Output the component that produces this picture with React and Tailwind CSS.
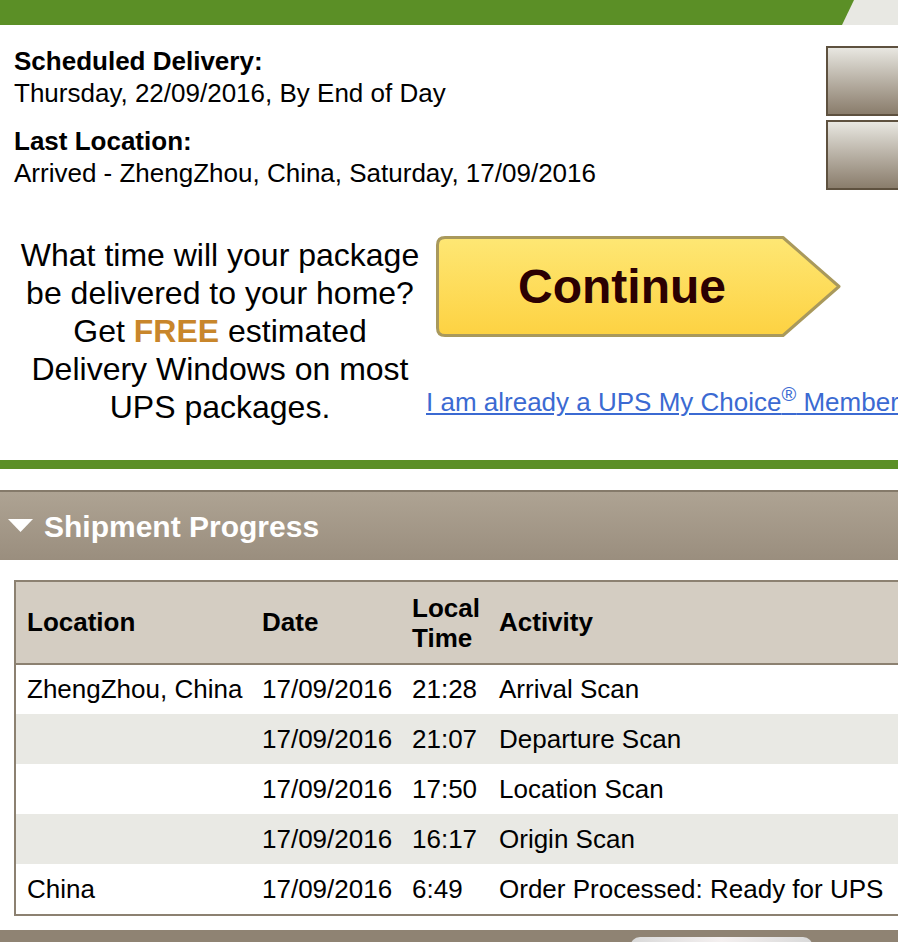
import React from 'react';

const rows = [
  { location: 'ZhengZhou, China', date: '17/09/2016', time: '21:28', activity: 'Arrival Scan' },
  { location: '', date: '17/09/2016', time: '21:07', activity: 'Departure Scan' },
  { location: '', date: '17/09/2016', time: '17:50', activity: 'Location Scan' },
  { location: '', date: '17/09/2016', time: '16:17', activity: 'Origin Scan' },
  { location: 'China', date: '17/09/2016', time: '6:49', activity: 'Order Processed: Ready for UPS' },
];

function ContinueButton() {
  return (
    <div className="relative w-[406px] h-[101px]">
      <svg className="absolute inset-0" width="406" height="101" viewBox="0 0 406 101">
        <defs>
          <linearGradient id="cont" x1="0" y1="0" x2="0" y2="1">
            <stop offset="0" stopColor="#fee774" />
            <stop offset="1" stopColor="#fdd242" />
          </linearGradient>
        </defs>
        <path
          d="M9 1.5 H347 L403 50.5 L347 99.5 H9 Q1.5 99.5 1.5 92 V9 Q1.5 1.5 9 1.5 Z"
          fill="url(#cont)"
          stroke="#a9995c"
          strokeWidth="3"
          strokeLinejoin="round"
        />
      </svg>
      <div className="absolute left-0 top-0 w-[372px] h-[101px] flex items-center justify-center">
        <span className="text-[48px] font-bold text-[#2b0002] leading-none">Continue</span>
      </div>
    </div>
  );
}

export default function App() {
  return (
    <div className="w-[898px] min-h-screen overflow-hidden bg-white text-black font-['Liberation_Sans',Arial,sans-serif]">
      {/* top bar */}
      <div className="h-[25px] bg-[#e8e8e3]">
        <div className="h-full w-[854px] bg-[#5b8f26] [clip-path:polygon(0_0,100%_0,calc(100%-12px)_100%,0_100%)]"></div>
      </div>

      {/* status */}
      <div className="flex justify-between">
        <div className="pl-[14px] pt-[20px] text-[26px] leading-[32px]">
          <div className="font-bold">Scheduled Delivery:</div>
          <div>Thursday, 22/09/2016, By End of Day</div>
          <div className="font-bold mt-[16px]">Last Location:</div>
          <div>Arrived - ZhengZhou, China, Saturday, 17/09/2016</div>
        </div>
        <div className="pt-[21px] flex flex-col gap-[4px] w-[72px] shrink-0">
          <div className="h-[70px] w-[90px] border-2 border-[#5e513f] bg-gradient-to-b from-[#e8e7e1] to-[#8a7d6c]"></div>
          <div className="h-[70px] w-[90px] border-2 border-[#5e513f] bg-gradient-to-b from-[#e8e7e1] to-[#8a7d6c]"></div>
        </div>
      </div>

      {/* promo */}
      <div className="flex items-start mt-[46px]">
        <div className="w-[426px] pl-[14px] shrink-0 text-center text-[32px] leading-[38px]">
          What time will your package be delivered to your home? Get{' '}
          <span className="font-bold text-[#c8862b]">FREE</span> estimated Delivery Windows on most UPS packages.
        </div>
        <div className="flex flex-col">
          <div className="ml-[10px]">
            <ContinueButton />
          </div>
          <a href="#" className="mt-[50px] whitespace-nowrap text-[26px] leading-[30px] text-[#3b6ad2] underline">
            I am already a UPS My Choice<sup className="text-[20px]">®</sup> Member
          </a>
        </div>
      </div>

      <div className="h-[9px] bg-[#5b8f26] mt-[34px]"></div>

      {/* shipment progress */}
      <div className="mt-[21px] h-[70px] border-t-2 border-[#857a6a] bg-gradient-to-b from-[#aea393] to-[#9a8e7e] flex items-center">
        <svg className="ml-[8px]" width="25" height="14" viewBox="0 0 25 14">
          <polygon points="0,0 25,0 12.5,13" fill="#ffffff" />
        </svg>
        <span className="ml-[11px] text-[30px] font-bold text-white">Shipment Progress</span>
      </div>

      <div className="mt-[20px] ml-[14px] w-[900px] border-2 border-[#8c8171]">
        <table className="w-full table-fixed border-collapse text-[26px]">
          <colgroup>
            <col className="w-[235px]" />
            <col className="w-[150px]" />
            <col className="w-[87px]" />
            <col />
          </colgroup>
          <thead>
            <tr className="bg-[#d4cdc2] h-[82px] border-b-2 border-[#8c8171] text-left">
              <th className="pl-[11px] font-bold">Location</th>
              <th className="pl-[11px] font-bold">Date</th>
              <th className="pl-[11px] font-bold leading-[30px]">
                Local
                <br />
                Time
              </th>
              <th className="pl-[11px] font-bold">Activity</th>
            </tr>
          </thead>
          <tbody>
            {rows.map((r, i) => (
              <tr key={i} className={`h-[50px] ${i % 2 === 1 ? 'bg-[#e9e9e4]' : 'bg-white'}`}>
                <td className="pl-[11px] whitespace-nowrap">{r.location}</td>
                <td className="pl-[11px] whitespace-nowrap">{r.date}</td>
                <td className="pl-[11px] whitespace-nowrap">{r.time}</td>
                <td className="pl-[11px] whitespace-nowrap">{r.activity}</td>
              </tr>
            ))}
          </tbody>
        </table>
      </div>

      <div className="mt-[14px] h-[20px] bg-[#8f8373] pt-[7px] pl-[630px]">
        <div className="w-[183px] h-[13px] rounded-t-[10px] bg-gradient-to-r from-[#d9d9d9] via-[#f4f0f0] to-[#d9d9d9]"></div>
      </div>
    </div>
  );
}
